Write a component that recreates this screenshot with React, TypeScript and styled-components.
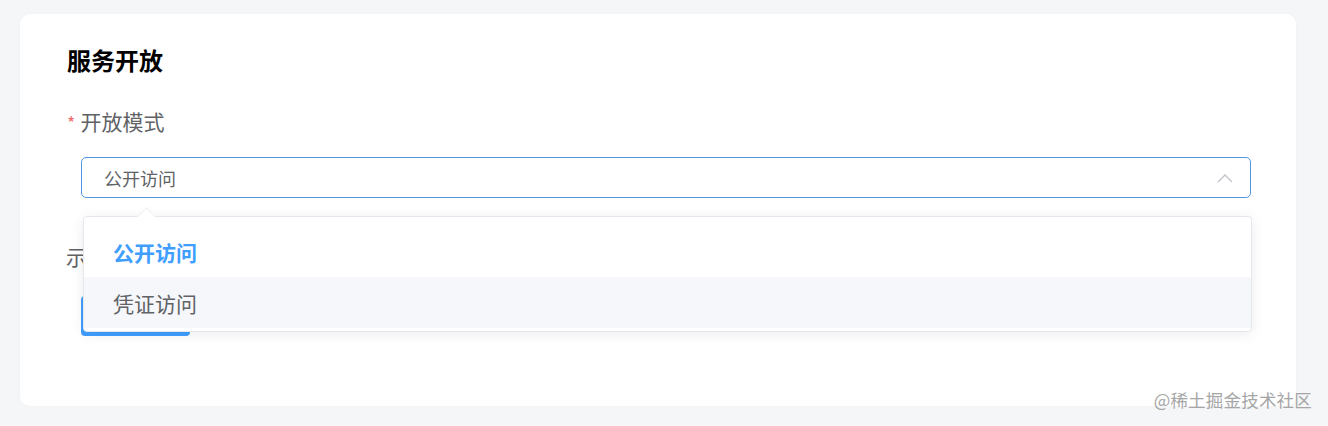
import React from "react";
import styled, { createGlobalStyle } from "styled-components";

const Global = createGlobalStyle`
  html, body { margin: 0; padding: 0; background: #f4f6f8; }
  body { font-family: "Noto Sans CJK SC", "Noto Sans", sans-serif; }
  #root { height: 426px; }
`;

const Page = styled.div`
  position: relative;
  height: 426px;
  box-sizing: border-box;
  padding: 14px 32px 20px 20px;
  display: flex;
  flex-direction: column;
`;

const Card = styled.section`
  flex: 1;
  background: #ffffff;
  border-radius: 10px;
  box-shadow: 0 0 6px rgba(0, 0, 0, 0.02);
  padding: 29px 45px 0 46px;
  display: flex;
  flex-direction: column;
`;

const Title = styled.h2`
  margin: 0;
  font-size: 24px;
  line-height: 34px;
  font-weight: 700;
  color: #000000;
  padding-left: 1px;
`;

const FormItem = styled.div<{ $gap: number }>`
  margin-top: ${(p) => p.$gap}px;
  display: flex;
  flex-direction: column;
`;

const Label = styled.label<{ $required?: boolean }>`
  font-size: 21px;
  line-height: 30px;
  height: 30px;
  color: #606266;
  display: flex;
  align-items: center;
  padding-left: ${(p) => (p.$required ? 1 : 0)}px;
`;

const Star = styled.span`
  color: #f56c6c;
  font-size: 18px;
  margin-right: 5px;
  margin-top: 2px;
`;

const Control = styled.div<{ $top: number }>`
  position: relative;
  margin-top: ${(p) => p.$top}px;
  margin-left: 15px;
`;

const SelectBox = styled.div`
  height: 41px;
  box-sizing: border-box;
  border: 1px solid #4f97e4;
  border-radius: 5px;
  background: #fff;
  display: flex;
  align-items: center;
  justify-content: space-between;
  padding: 0 17px 0 22px;
  font-size: 18px;
  color: #606266;
`;

const Dropdown = styled.div`
  position: absolute;
  top: calc(100% + 18px);
  left: 2px;
  right: -1px;
  box-sizing: border-box;
  background: #fff;
  border: 1px solid #e4e7ed;
  border-radius: 4px;
  box-shadow: 0 2px 14px rgba(0, 0, 0, 0.08);
  padding: 9px 0 3px;
  z-index: 10;
`;

const Arrow = styled.span`
  position: absolute;
  top: -7px;
  left: 56px;
  width: 12px;
  height: 12px;
  background: #fff;
  border-left: 1px solid #eef0f3;
  border-top: 1px solid #eef0f3;
  transform: rotate(45deg);
`;

const Option = styled.div<{ $selected?: boolean; $hover?: boolean }>`
  height: 51px;
  display: flex;
  align-items: center;
  padding-left: 29px;
  font-size: 21px;
  color: ${(p) => (p.$selected ? "#409eff" : "#606266")};
  font-weight: ${(p) => (p.$selected ? 700 : 400)};
  background: ${(p) => (p.$hover ? "#f5f7fa" : "transparent")};
  position: relative;
`;

const Button = styled.button`
  width: 109px;
  height: 40px;
  border: none;
  border-radius: 4px;
  background: #409eff;
  padding: 0;
`;

const Watermark = styled.div`
  position: absolute;
  right: 16px;
  top: 389px;
  font-size: 17.5px;
  line-height: 22px;
  color: #a6a6a6;
  letter-spacing: 0.2px;
`;

const Chevron = () => (
  <svg width="16" height="10" viewBox="0 0 16 10" fill="none">
    <polyline points="1,9 8,2 15,9" stroke="#c0c4cc" strokeWidth="1.4" />
  </svg>
);

export default function App() {
  return (
    <>
      <Global />
      <Page>
        <Card>
          <Title>服务开放</Title>
          <FormItem $gap={29}>
            <Label $required>
              <Star>*</Star>开放模式
            </Label>
            <Control $top={21}>
              <SelectBox>
                <span>公开访问</span>
                <Chevron />
              </SelectBox>
              <Dropdown>
                <Arrow />
                <Option $selected>公开访问</Option>
                <Option $hover>凭证访问</Option>
              </Dropdown>
            </Control>
          </FormItem>
          <FormItem $gap={43}>
            <Label>示例</Label>
            <Control $top={25}>
              <Button aria-label="保存" />
            </Control>
          </FormItem>
        </Card>
        <Watermark>@稀土掘金技术社区</Watermark>
      </Page>
    </>
  );
}
